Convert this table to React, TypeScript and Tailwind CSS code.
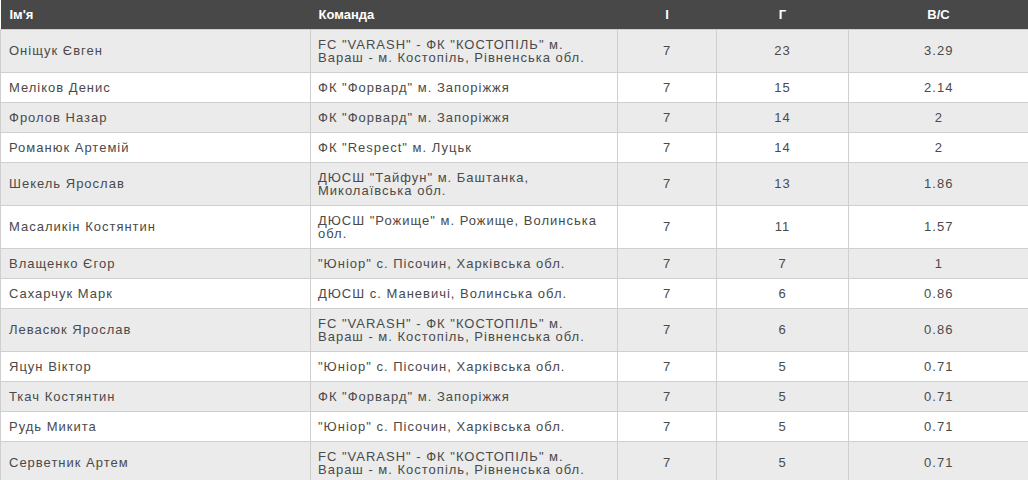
import React from "react";

type Row = [string, string, string, string, string];

const rows: Row[] = [
  ["Оніщук Євген", 'FC "VARASH" - ФК "КОСТОПІЛЬ" м. Вараш - м. Костопіль, Рівненська обл.', "7", "23", "3.29"],
  ["Меліков Денис", 'ФК "Форвард" м. Запоріжжя', "7", "15", "2.14"],
  ["Фролов Назар", 'ФК "Форвард" м. Запоріжжя', "7", "14", "2"],
  ["Романюк Артемій", 'ФК "Respect" м. Луцьк', "7", "14", "2"],
  ["Шекель Ярослав", 'ДЮСШ "Тайфун" м. Баштанка, Миколаївська обл.', "7", "13", "1.86"],
  ["Масаликін Костянтин", 'ДЮСШ "Рожище" м. Рожище, Волинська обл.', "7", "11", "1.57"],
  ["Влащенко Єгор", '"Юніор" с. Пісочин, Харківська обл.', "7", "7", "1"],
  ["Сахарчук Марк", "ДЮСШ с. Маневичі, Волинська обл.", "7", "6", "0.86"],
  ["Левасюк Ярослав", 'FC "VARASH" - ФК "КОСТОПІЛЬ" м. Вараш - м. Костопіль, Рівненська обл.', "7", "6", "0.86"],
  ["Яцун Віктор", '"Юніор" с. Пісочин, Харківська обл.', "7", "5", "0.71"],
  ["Ткач Костянтин", 'ФК "Форвард" м. Запоріжжя', "7", "5", "0.71"],
  ["Рудь Микита", '"Юніор" с. Пісочин, Харківська обл.', "7", "5", "0.71"],
  ["Серветник Артем", 'FC "VARASH" - ФК "КОСТОПІЛЬ" м. Вараш - м. Костопіль, Рівненська обл.', "7", "5", "0.71"],
];

export default function App() {
  return (
    <div className="w-[1028px] h-[480px] overflow-hidden bg-white" style={{ fontFamily: '"Liberation Sans", Arial, sans-serif' }}>
      <table className="table-fixed border-collapse w-[1028px] text-[13px] leading-[13px] text-[#4a4a4a]">
        <colgroup>
          <col className="w-[310px]" />
          <col className="w-[307px]" />
          <col className="w-[99px]" />
          <col className="w-[132px]" />
          <col className="w-[180px]" />
        </colgroup>
        <thead>
          <tr className="bg-[#484848] text-white h-[29px]">
            <th className="text-left font-bold px-[9px] p-0 border-b border-[#cfcfcf]">Ім'я</th>
            <th className="text-left font-bold px-[8px] p-0 border-b border-[#cfcfcf]">Команда</th>
            <th className="text-center font-bold p-0 border-b border-[#cfcfcf]">І</th>
            <th className="text-center font-bold p-0 border-b border-[#cfcfcf]">Г</th>
            <th className="text-center font-bold p-0 border-b border-[#cfcfcf]">В/С</th>
          </tr>
        </thead>
        <tbody>
          {rows.map((r, i) => (
            <tr key={i} className={i % 2 === 0 ? "bg-[#ebebeb]" : "bg-white"}>
              <td className="border border-[#cfcfcf] px-[8px] py-[8px] tracking-[1px] align-middle">{r[0]}</td>
              <td className="border border-[#cfcfcf] px-[7px] py-[8px] tracking-[1px] align-middle">{r[1]}</td>
              <td className="border border-[#cfcfcf] py-[8px] text-center tracking-[1px] align-middle">{r[2]}</td>
              <td className="border border-[#cfcfcf] py-[8px] text-center tracking-[1px] align-middle">{r[3]}</td>
              <td className="border border-[#cfcfcf] border-r-0 py-[8px] text-center tracking-[1px] align-middle">{r[4]}</td>
            </tr>
          ))}
        </tbody>
      </table>
    </div>
  );
}
